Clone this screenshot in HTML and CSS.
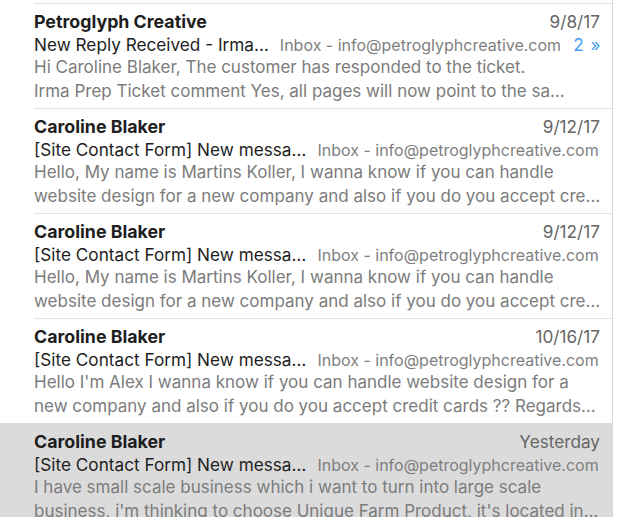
FILE: index.html
```html
<!DOCTYPE html>
<html>
<head>
<meta charset="utf-8">
<link rel="stylesheet" href="styles.css">
</head>
<body>
<div class="list">
  <div class="row">
    <div class="inner">
      <div class="line head"><span class="from">Petroglyph Creative</span><span class="date">9/8/17</span></div>
      <div class="line sub"><span class="subject">New Reply Received - Irma…</span><span class="box">Inbox - info@petroglyphcreative.com</span><span class="count">2 <span class="chev">»</span></span></div>
      <div class="preview">Hi Caroline Blaker, The customer has responded to the ticket.</div>
      <div class="preview">Irma Prep Ticket comment Yes, all pages will now point to the sa…</div>
    </div>
  </div>
  <div class="row">
    <div class="inner">
      <div class="line head"><span class="from">Caroline Blaker</span><span class="date">9/12/17</span></div>
      <div class="line sub"><span class="subject">[Site Contact Form] New messa…</span><span class="box">Inbox - info@petroglyphcreative.com</span></div>
      <div class="preview">Hello, My name is Martins Koller, I wanna know if you can handle</div>
      <div class="preview">website design for a new company and also if you do you accept cre…</div>
    </div>
  </div>
  <div class="row">
    <div class="inner">
      <div class="line head"><span class="from">Caroline Blaker</span><span class="date">9/12/17</span></div>
      <div class="line sub"><span class="subject">[Site Contact Form] New messa…</span><span class="box">Inbox - info@petroglyphcreative.com</span></div>
      <div class="preview">Hello, My name is Martins Koller, I wanna know if you can handle</div>
      <div class="preview">website design for a new company and also if you do you accept cre…</div>
    </div>
  </div>
  <div class="row">
    <div class="inner">
      <div class="line head"><span class="from">Caroline Blaker</span><span class="date">10/16/17</span></div>
      <div class="line sub"><span class="subject">[Site Contact Form] New messa…</span><span class="box">Inbox - info@petroglyphcreative.com</span></div>
      <div class="preview">Hello I'm Alex I wanna know if you can handle website design for a</div>
      <div class="preview">new company and also if you do you accept credit cards ?? Regards…</div>
    </div>
  </div>
  <div class="row selected">
    <div class="inner">
      <div class="line head"><span class="from">Caroline Blaker</span><span class="date">Yesterday</span></div>
      <div class="line sub"><span class="subject">[Site Contact Form] New messa…</span><span class="box">Inbox - info@petroglyphcreative.com</span></div>
      <div class="preview">I have small scale business which i want to turn into large scale</div>
      <div class="preview">business, i'm thinking to choose Unique Farm Product, it's located in…</div>
    </div>
  </div>
</div>
</body>
</html>
```
FILE: styles.css
```css
html, body {
  margin: 0;
  padding: 0;
  background: #fff;
  overflow: hidden;
}
body {
  font-family: "Inter", "Liberation Sans", Arial, sans-serif;
  -webkit-font-smoothing: antialiased;
}
.list {
  width: 612px;
  border-right: 1px solid #d6d6d6;
  padding-top: 3px;
  height: 600px;
}
.row {
  padding-left: 34px;
}
.row.selected {
  background: #dbdbdb;
}
.row.selected .inner {
  border-top-color: #dbdbdb;
}
.inner {
  border-top: 1px solid #e3e3e3;
  padding: 5px 12px 5px 0;
  height: 94px;
}
.line {
  display: flex;
  align-items: baseline;
  height: 23.5px;
  line-height: 23.5px;
  white-space: nowrap;
}
.head {
  justify-content: space-between;
}
.from {
  font-weight: bold;
  font-size: 17.8px;
  color: #1e1e1e;
  position: relative;
  top: 1px;
}
.date {
  font-size: 17.2px;
  color: #666;
  position: relative;
  top: 1px;
}
.subject {
  font-size: 17.2px;
  color: #1e1e1e;
  flex: none;
}
.box {
  flex: none;
  font-size: 16px;
  color: #7f7f7f;
  margin-left: 11px;
}
.count {
  flex: none;
  font-size: 17.2px;
  color: #4aa0f0;
  margin-left: 12px;
}
.chev {
  margin-left: 2px;
}
.preview {
  font-size: 17px;
  line-height: 23.5px;
  height: 23.5px;
  color: #7c7c7c;
  white-space: nowrap;
}
```
